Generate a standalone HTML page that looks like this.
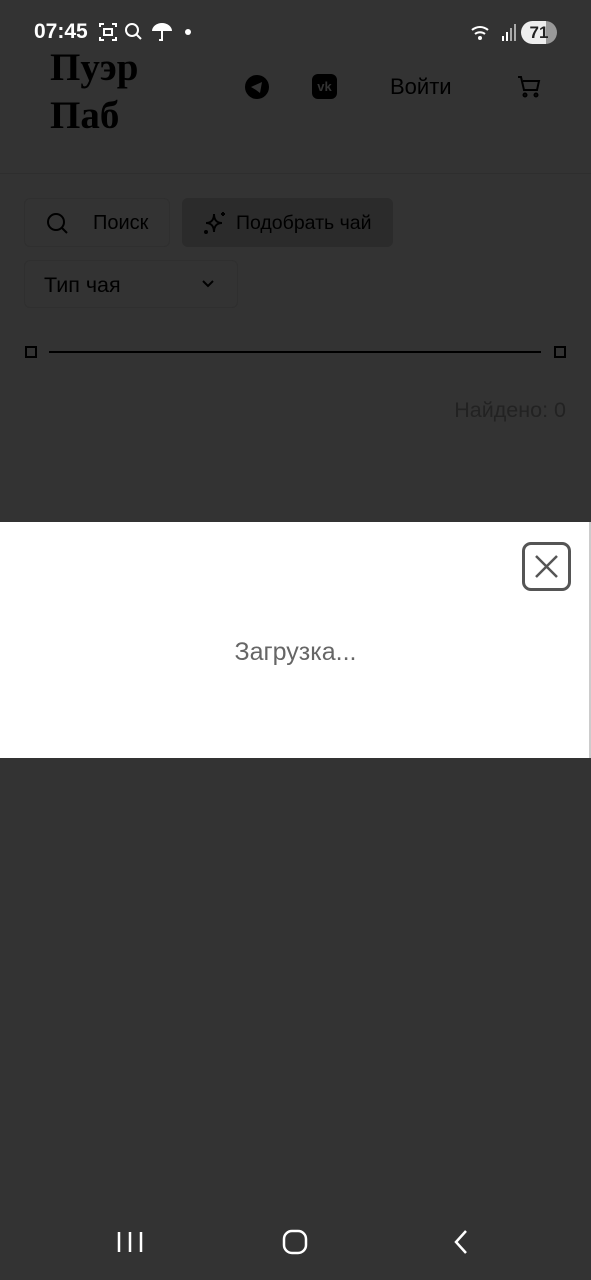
<!DOCTYPE html>
<html><head><meta charset="utf-8"><style>
*{margin:0;padding:0;box-sizing:border-box}
body{width:591px;height:1280px;background:#333;font-family:"Liberation Sans",sans-serif;position:relative;overflow:hidden}
.a{position:absolute}
</style></head><body>
<div class="a" style="left:34px;top:20px;color:#fff;font-weight:bold;font-size:21px">07:45</div>
<svg class="a" style="left:98px;top:20px" width="100" height="26" viewBox="0 0 100 26">
<g fill="none" stroke="#fff" stroke-width="2">
<path d="M2 7V4h4M14 4h4v3M18 17v3h-4M6 20H2v-3"/><rect x="6" y="9" width="8" height="6"/>
<circle cx="34" cy="10" r="6"/><path d="M38 14l5 5"/>
<path d="M64 10v10h-3"/></g>
<path d="M54 11a10 8 0 0 1 20 0z" fill="#fff"/><circle cx="90" cy="12" r="3" fill="#fff"/></svg>
<svg class="a" style="left:470px;top:22px" width="48" height="22"><g fill="none" stroke="#fff" stroke-width="2"><path d="M2 8a12 12 0 0 1 16 0M5 12a8 8 0 0 1 10 0"/></g><circle cx="10" cy="16" r="2" fill="#fff"/><rect x="32" y="14" width="2" height="5" fill="#fff"/><rect x="36" y="10" width="2" height="9" fill="#fff"/><rect x="40" y="6" width="2" height="13" fill="#aaa"/><rect x="44" y="2" width="2" height="17" fill="#aaa"/></svg>
<div class="a" style="left:521px;top:21px;width:36px;height:23px;border-radius:12px;background:linear-gradient(90deg,#eee 70%,#999 70%);color:#222;font-weight:bold;font-size:17px;text-align:center;line-height:23px">71</div>
<div class="a" style="left:50px;top:44px;font-family:'Liberation Serif',serif;font-weight:bold;font-size:39px;line-height:48px;color:#000">Пуэр<br>Паб</div>
<svg class="a" style="left:245px;top:75px" width="24" height="24"><circle cx="12" cy="12" r="12" fill="#000"/><path d="M6 12l11-5-2 11-4-3z" fill="#333"/></svg>
<div class="a" style="left:312px;top:74px;width:25px;height:25px;border-radius:6px;background:#000;color:#333;font-weight:bold;font-size:13px;text-align:center;line-height:25px">vk</div>
<div class="a" style="left:390px;top:74px;font-size:22px;color:#000">Войти</div>
<svg class="a" style="left:516px;top:75px" width="26" height="24" fill="none" stroke="#000" stroke-width="2"><path d="M2 2h3l3 13h13l2-9H7"/><circle cx="9" cy="20" r="1.5"/><circle cx="20" cy="20" r="1.5"/></svg>
<div class="a" style="left:0;top:173px;width:591px;height:1px;background:#2e2e2e"></div>
<div class="a" style="left:24px;top:198px;width:146px;height:49px;border:1px solid #2f2f2f;border-radius:6px"></div>
<svg class="a" style="left:45px;top:211px" width="24" height="24" fill="none" stroke="#000" stroke-width="2"><circle cx="11" cy="11" r="8"/><path d="M17 17l5 5"/></svg>
<div class="a" style="left:93px;top:212px;font-size:20px;color:#000">Поиск</div>
<div class="a" style="left:182px;top:198px;width:211px;height:49px;background:#2b2b2b;border-radius:6px"></div>
<svg class="a" style="left:202px;top:210px" width="26" height="26" fill="none" stroke="#000" stroke-width="2"><path d="M12 4c0 6 3 9 8 9-5 0-8 3-8 9 0-6-3-9-8-9 5 0 8-3 8-9z"/><path d="M21 2v4M19 4h4"/><circle cx="4" cy="22" r="1"/></svg>
<div class="a" style="left:236px;top:212px;font-size:19.5px;color:#000">Подобрать чай</div>
<div class="a" style="left:24px;top:260px;width:214px;height:48px;border:1px solid #2f2f2f;border-radius:6px"></div>
<div class="a" style="left:44px;top:273px;font-size:21.5px;color:#000">Тип чая</div>
<svg class="a" style="left:200px;top:278px" width="16" height="12" fill="none" stroke="#000" stroke-width="2"><path d="M3 3l5 5 5-5"/></svg>
<div class="a" style="left:25px;top:346px;width:12px;height:12px;border:2px solid #000"></div>
<div class="a" style="left:49px;top:351px;width:492px;height:2px;background:#000"></div>
<div class="a" style="left:554px;top:346px;width:12px;height:12px;border:2px solid #000"></div>
<div class="a" style="right:25px;top:398px;font-size:21.5px;color:#222">Найдено: 0</div>
<div class="a" style="left:0;top:522px;width:591px;height:236px;background:#fff;border-right:2px solid #ccc"></div>
<div class="a" style="left:522px;top:542px;width:49px;height:49px;border:3px solid #555;border-radius:9px"></div>
<svg class="a" style="left:522px;top:542px" width="49" height="49" stroke="#555" stroke-width="2.5"><path d="M14 14l21 21M35 14L14 35"/></svg>
<div class="a" style="left:0;top:638px;width:591px;text-align:center;font-size:25px;color:#666">Загрузка...</div>
<svg class="a" style="left:110px;top:1226px" width="380" height="32" fill="none" stroke="#fff" stroke-width="2.5"><path d="M9 6v20M20 6v20M31 6v20"/><rect x="174" y="5" width="22" height="22" rx="8"/><path d="M356 5l-10 11 10 11"/></svg>
</body></html>
